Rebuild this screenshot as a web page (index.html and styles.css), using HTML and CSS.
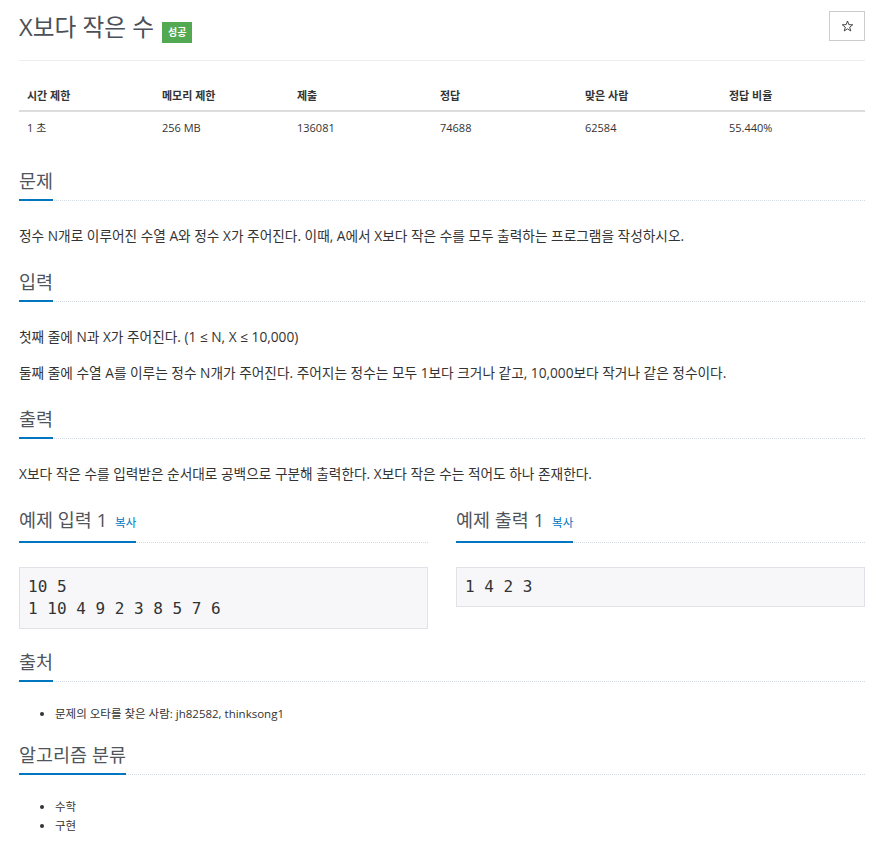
FILE: index.html
```html
<!DOCTYPE html>
<html lang="ko">
<head>
  <meta charset="UTF-8">
  <meta name="viewport" content="width=device-width, initial-scale=1.0">
  <title>X보다 작은 수</title>
  <link rel="stylesheet" href="styles.css">
</head>
<body>
  <!-- Page title -->
  <div class="page-header">
    <h1 class="title">
      <span class="title-text">X보다 작은 수</span>
      <span class="label-success">성공</span>
    </h1>
    <button class="star-btn" type="button" aria-label="즐겨찾기">
      <svg width="13" height="12" viewBox="0 0 12 12">
        <polygon points="6,1 7.35,4.64 11.23,4.8 8.19,7.21 9.23,10.95 6,8.8 2.77,10.95 3.81,7.21 0.77,4.8 4.65,4.64" fill="none" stroke="#333" stroke-width="0.9" stroke-linejoin="round"/>
      </svg>
    </button>
  </div>

  <!-- Problem info -->
  <table class="problem-info">
    <thead>
      <tr>
        <th>시간 제한</th>
        <th>메모리 제한</th>
        <th>제출</th>
        <th>정답</th>
        <th>맞은 사람</th>
        <th>정답 비율</th>
      </tr>
    </thead>
    <tbody>
      <tr>
        <td>1 초</td>
        <td>256 MB</td>
        <td>136081</td>
        <td>74688</td>
        <td>62584</td>
        <td>55.440%</td>
      </tr>
    </tbody>
  </table>

  <section class="problem-section">
    <div class="headline"><h2>문제</h2></div>
    <p>정수 N개로 이루어진 수열 A와 정수 X가 주어진다. 이때, A에서 X보다 작은 수를 모두 출력하는 프로그램을 작성하시오.</p>
  </section>

  <section class="problem-section">
    <div class="headline"><h2>입력</h2></div>
    <p>첫째 줄에 N과 X가 주어진다. (1 ≤ N, X ≤ 10,000)</p>
    <p>둘째 줄에 수열 A를 이루는 정수 N개가 주어진다. 주어지는 정수는 모두 1보다 크거나 같고, 10,000보다 작거나 같은 정수이다.</p>
  </section>

  <section class="problem-section">
    <div class="headline"><h2>출력</h2></div>
    <p>X보다 작은 수를 입력받은 순서대로 공백으로 구분해 출력한다. X보다 작은 수는 적어도 하나 존재한다.</p>
  </section>

  <!-- Sample data -->
  <div class="samples">
    <section class="sample">
      <div class="headline headline-sample"><h2>예제 입력 1 <a class="copy-link" href="#">복사</a></h2></div>
      <pre class="sampledata">10 5
1 10 4 9 2 3 8 5 7 6</pre>
    </section>
    <section class="sample">
      <div class="headline headline-sample"><h2>예제 출력 1 <a class="copy-link" href="#">복사</a></h2></div>
      <pre class="sampledata">1 4 2 3</pre>
    </section>
  </div>

  <section class="problem-section list-section">
    <div class="headline"><h2>출처</h2></div>
    <ul>
      <li>문제의 오타를 찾은 사람: jh82582, thinksong1</li>
    </ul>
  </section>

  <section class="problem-section list-section">
    <div class="headline"><h2>알고리즘 분류</h2></div>
    <ul>
      <li>수학</li>
      <li>구현</li>
    </ul>
  </section>
</body>
</html>
```

FILE: styles.css
```css
/* General styles */
body {
  margin: 0;
  padding: 0 18px 0 19px;
  font-family: "Open Sans", "Noto Sans CJK KR", sans-serif;
  font-size: 13.7px;
  color: #333;
  background-color: #fff;
}

/* Title bar */
.page-header {
  display: flex;
  justify-content: space-between;
  align-items: flex-start;
  padding: 11px 0 17px;
  border-bottom: 1px solid #eee;
}

.title {
  display: flex;
  align-items: flex-start;
  gap: 8px;
  margin: 1px 0 0;
  font-weight: normal;
}

.title-text {
  font-size: 23.7px;
  line-height: 30px;
  color: #4b5057;
}

.label-success {
  margin-top: 10px;
  padding: 4px 6px;
  font-size: 10px;
  line-height: 13px;
  font-weight: bold;
  color: #fff;
  background: #53a951; /* Green */
}

.star-btn {
  width: 36px;
  height: 30px;
  display: flex;
  justify-content: center;
  align-items: center;
  padding: 0;
  background: #fff;
  border: 1px solid #ccc;
  cursor: pointer;
}

/* Info table */
.problem-info {
  width: 100%;
  margin: 18px 0 0;
  border-collapse: collapse;
  table-layout: fixed;
  font-size: 11px;
}

.problem-info th,
.problem-info td {
  text-align: left;
  line-height: 16px;
}

.problem-info th {
  padding: 9px 8px 6px;
  font-weight: bold;
  border-bottom: 2px solid #ddd;
}

.problem-info td {
  padding: 8px;
}

/* Widths are content widths (8px padding each side) */
.problem-info th:nth-child(1),
.problem-info th:nth-child(2) {
  width: 119px;
}

.problem-info th:nth-child(3) {
  width: 127px;
}

.problem-info th:nth-child(4) {
  width: 129px;
}

.problem-info th:nth-child(5) {
  width: 128px;
}

/* Sections */
.problem-section {
  display: flow-root;
  padding-bottom: 8px;
}

.problem-info + .problem-section {
  margin-top: 25px;
}

.headline {
  display: flex;
  margin-bottom: 25px;
  border-bottom: 1px dotted #d5dbe2;
}

.headline h2 {
  margin: 0 0 -1px;
  padding-bottom: 6px;
  font-size: 18.5px;
  line-height: 24px;
  font-weight: normal;
  color: #50555c;
  border-bottom: 2px solid #0076c0; /* Blue underline */
}

.headline-sample {
  margin-bottom: 24px;
}

.copy-link {
  margin-left: 3px;
  font-size: 11.5px;
  color: #0076c0;
  text-decoration: none;
}

p {
  margin: 0 0 16px;
  line-height: 20px;
}

/* Sample input / output */
.samples {
  display: grid;
  grid-template-columns: 1fr 1fr;
  gap: 28px;
  margin-bottom: 21px;
}

.sampledata {
  margin: 0;
  padding: 8px;
  font-family: "DejaVu Sans Mono", "Liberation Mono", monospace;
  font-size: 16px;
  line-height: 22px;
  color: #333;
  background: #f7f7f9;
  border: 1px solid #e1e1e8;
}

/* Lists */
.list-section {
  padding-bottom: 20px;
}

.list-section .headline {
  margin-bottom: 22px;
}

ul {
  margin: 0;
  padding-left: 36px;
  font-size: 11.5px;
  line-height: 19px;
}
```
